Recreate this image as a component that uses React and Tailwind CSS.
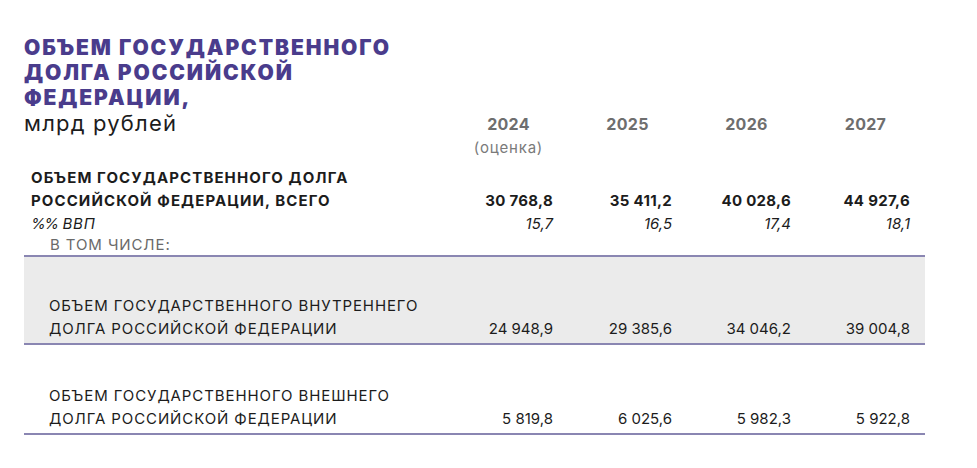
import React from "react";

const cols = "grid grid-cols-[425px_119px_119px_119px_119px]";
const font = { fontFamily: "Inter, 'Noto Sans', sans-serif" };

export default function App() {
  const years = ["2024", "2025", "2026", "2027"];
  const totals = ["30 768,8", "35 411,2", "40 028,6", "44 927,6"];
  const pct = ["15,7", "16,5", "17,4", "18,1"];
  const inner = ["24 948,9", "29 385,6", "34 046,2", "39 004,8"];
  const outer = ["5 819,8", "6 025,6", "5 982,3", "5 922,8"];
  return (
    <div className="w-[977px] h-[468px] bg-white pl-[24px] pt-[35px] text-[#1c1c1c]" style={font}>
      <div className="text-[21px] leading-[25px] font-black text-[#4a3c8c] tracking-[1.9px]">
        <div>ОБЪЕМ ГОСУДАРСТВЕННОГО</div>
        <div>ДОЛГА РОССИЙСКОЙ</div>
        <div>ФЕДЕРАЦИИ,</div>
      </div>
      <div className={`${cols} h-[25px] items-center`}>
        <div className="text-[22px] leading-[25px] text-[#1c1c1c] tracking-[1.2px]">млрд рублей</div>
        {years.map((y) => (
          <div key={y} className="text-center text-[16px] font-bold text-[#6e6e6e] pt-[2px] tracking-[0.3px]">{y}</div>
        ))}
      </div>
      <div className={`${cols} h-[31px] pt-[2px]`}>
        <div />
        <div className="text-center text-[15px] leading-[22px] text-[#7a7a7a] tracking-[0.8px]">(оценка)</div>
      </div>
      <div className={`${cols} items-end`}>
        <div className="pl-[7px] text-[15px] leading-[23px] font-bold tracking-[1.1px]">
          <div>ОБЪЕМ ГОСУДАРСТВЕННОГО ДОЛГА</div>
          <div>РОССИЙСКОЙ ФЕДЕРАЦИИ, ВСЕГО</div>
        </div>
        {totals.map((t) => (
          <div key={t} className="text-right pr-[15px] text-[15px] leading-[23px] font-bold tracking-[0.3px]">{t}</div>
        ))}
      </div>
      <div className={`${cols} items-end`}>
        <div className="pl-[7px] text-[15px] leading-[23px] italic">
          <span className="tracking-[-1.5px]">%%</span>
          <span className="tracking-[0.8px]"> ВВП</span>
        </div>
        {pct.map((t) => (
          <div key={t} className="text-right pr-[15px] text-[15px] leading-[23px] italic">{t}</div>
        ))}
      </div>
      <div className="pl-[26px] h-[20px] text-[15px] leading-[20px] text-[#6a6a6a] tracking-[0.9px]">В ТОМ ЧИСЛЕ:</div>
      <div className={`${cols} w-[901px] items-end h-[90px] bg-[#ebebeb] border-y-2 border-[#8a86b2] pb-[3px]`}>
        <div className="pl-[25px] text-[15px] leading-[23px] tracking-[0.9px]">
          <div>ОБЪЕМ ГОСУДАРСТВЕННОГО ВНУТРЕННЕГО</div>
          <div>ДОЛГА РОССИЙСКОЙ ФЕДЕРАЦИИ</div>
        </div>
        {inner.map((t) => (
          <div key={t} className="text-right pr-[15px] text-[15px] leading-[23px]">{t}</div>
        ))}
      </div>
      <div className={`${cols} w-[901px] items-end h-[90px] border-b-2 border-[#8a86b2] pb-[3px]`}>
        <div className="pl-[25px] text-[15px] leading-[23px] tracking-[0.9px]">
          <div>ОБЪЕМ ГОСУДАРСТВЕННОГО ВНЕШНЕГО</div>
          <div>ДОЛГА РОССИЙСКОЙ ФЕДЕРАЦИИ</div>
        </div>
        {outer.map((t) => (
          <div key={t} className="text-right pr-[15px] text-[15px] leading-[23px]">{t}</div>
        ))}
      </div>
    </div>
  );
}
